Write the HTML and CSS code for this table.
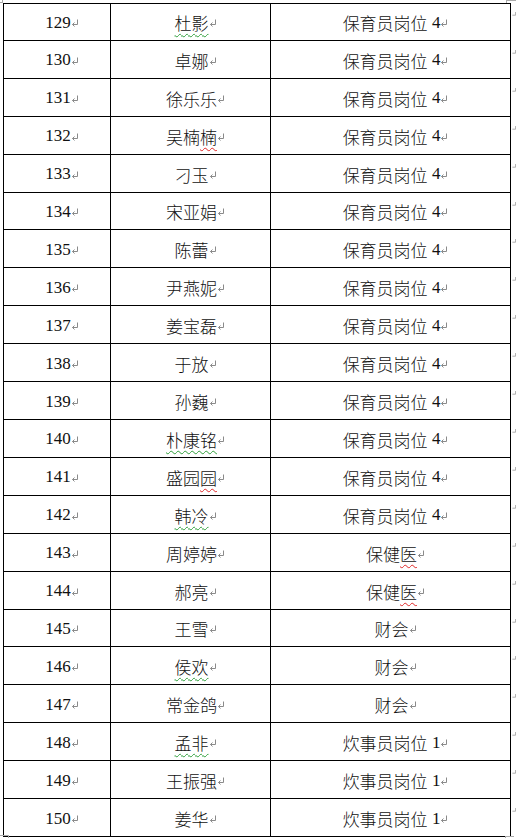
FILE: index.html
```html
<!DOCTYPE html>
<html lang="zh">
<head>
<meta charset="utf-8">
<link rel="stylesheet" href="styles.css">
</head>
<body>
<div class="sheet" id="sheet"></div>
<span class="corner tl"></span><span class="corner tr"></span><span class="corner bl"></span><span class="corner br"></span>
<script src="app.js"></script>
</body>
</html>
```
FILE: styles.css
```css
html, body { margin: 0; padding: 0; background: #fff; }
body { width: 516px; height: 838px; overflow: hidden; position: relative; }
.sheet {
  margin: 3px 0 0 3px;
  display: grid;
  grid-template-columns: 108px 160px 240px 5px;
  grid-template-rows: repeat(22, 1fr);
  height: 834px;
  width: 513px;
}
.cell {
  border-right: 1px solid #000;
  border-bottom: 1px solid #000;
  display: flex;
  align-items: center;
  justify-content: center;
  padding-left: 10px;
  padding-top: 2px;
  font-size: 17px;
  color: #111;
  font-family: "Liberation Serif", "Noto Sans CJK SC", serif;
  white-space: nowrap;
  box-sizing: border-box;
}
.cell.first { border-left: 1px solid #000; }
.cell.top { border-top: 1px solid #000; }
.cjk { font-family: "Noto Sans CJK SC", sans-serif; font-weight: 300; }
.num { font-family: "Liberation Serif", serif; }
.ret { display: inline-block; width: 8px; height: 9px; margin-left: 0; vertical-align: -1px; }
.ret path { fill: none; stroke: #8a8a8a; stroke-width: 1; }
.wg { text-decoration: underline wavy #2e9e3a; text-decoration-thickness: 1px; text-underline-offset: 3px; }
.wr { text-decoration: underline wavy #e02828; text-decoration-thickness: 1px; text-underline-offset: 3px; }
.end { display: flex; align-items: flex-start; padding-top: 8px; padding-left: 1px; }
.end svg { width: 5px; height: 6px; }
.end path { fill: none; stroke: #999; stroke-width: 1; }
.corner { position: absolute; background: none; border-color: #aaa; border-style: solid; border-width: 0; width: 8px; height: 4px; }
.corner.tl { left: 0; top: 0; border-right-width: 1px; border-bottom-width: 1px; width: 2px; height: 2px; }
.corner.tr { left: 506px; top: 0; border-left-width: 1px; border-top-width: 1px; width: 9px; height: 2px; }
.corner.bl { left: 0; top: 835px; border-top-width: 1px; border-right-width: 1px; width: 8px; height: 3px; }
.corner.br { left: 505px; top: 836px; border-top-width: 1px; border-left-width: 1px; width: 8px; height: 3px; }
```
FILE: app.js
```js
var rows = [
  ["129", [["杜影","g"]], "保育员岗位", "4"],
  ["130", [["卓娜",""]], "保育员岗位", "4"],
  ["131", [["徐乐乐",""]], "保育员岗位", "4"],
  ["132", [["吴楠",""],["楠","r"]], "保育员岗位", "4"],
  ["133", [["刁玉",""]], "保育员岗位", "4"],
  ["134", [["宋亚娟",""]], "保育员岗位", "4"],
  ["135", [["陈蕾",""]], "保育员岗位", "4"],
  ["136", [["尹燕妮",""]], "保育员岗位", "4"],
  ["137", [["姜宝磊",""]], "保育员岗位", "4"],
  ["138", [["于放",""]], "保育员岗位", "4"],
  ["139", [["孙巍",""]], "保育员岗位", "4"],
  ["140", [["朴康铭","g"]], "保育员岗位", "4"],
  ["141", [["盛园",""],["园","r"]], "保育员岗位", "4"],
  ["142", [["韩冷","g"]], "保育员岗位", "4"],
  ["143", [["周婷婷",""]], "保健医", ""],
  ["144", [["郝亮",""]], "保健医", ""],
  ["145", [["王雪",""]], "财会", ""],
  ["146", [["侯欢","g"]], "财会", ""],
  ["147", [["常金鸽",""]], "财会", ""],
  ["148", [["孟非","g"]], "炊事员岗位", "1"],
  ["149", [["王振强",""]], "炊事员岗位", "1"],
  ["150", [["姜华",""]], "炊事员岗位", "1"]
];
var ret = '<svg class="ret" viewBox="0 0 8 9"><path d="M6.5 1.5V6.5H1.5M3.5 4.5L1.5 6.5L3.5 8.5"/></svg>';
var endMark = '<svg viewBox="0 0 5 6"><path d="M4.5 0.5V4.5H0.5"/></svg>';
var sheet = document.getElementById("sheet");
var html = "";
rows.forEach(function (r, i) {
  var top = i === 0 ? " top" : "";
  html += '<div class="cell first' + top + '"><span class="num">' + r[0] + '</span>' + ret + '</div>';
  var name = r[1].map(function (p) {
    var cls = p[1] === "g" ? "wg" : (p[1] === "r" ? "wr" : "");
    return cls ? '<span class="' + cls + '">' + p[0] + '</span>' : p[0];
  }).join("");
  html += '<div class="cell' + top + '"><span class="cjk">' + name + '</span>' + ret + '</div>';
  var job = r[2];
  var jobHtml;
  if (job === "保健医") {
    jobHtml = '<span class="cjk">保健<span class="wr">医</span></span>';
  } else {
    jobHtml = '<span class="cjk">' + job + '</span>';
  }
  if (r[3]) jobHtml += '<span class="num">&nbsp;' + r[3] + '</span>';
  html += '<div class="cell' + top + '">' + jobHtml + ret + '</div>';
  html += '<div class="end">' + endMark + '</div>';
});
sheet.innerHTML = html;
```
